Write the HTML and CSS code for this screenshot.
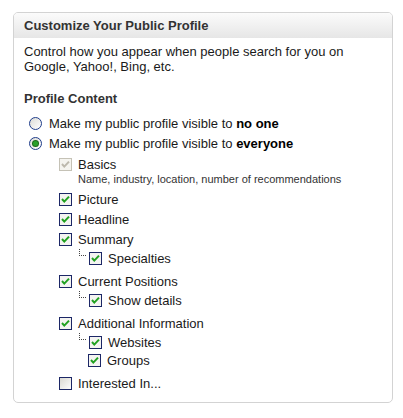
FILE: index.html
```html
<!DOCTYPE html>
<html>
<head>
<meta charset="utf-8">
<link rel="stylesheet" href="styles.css">
</head>
<body>
<div class="card">
  <div class="card-head"><h2>Customize Your Public Profile</h2></div>
  <div class="card-body">
    <p class="intro">Control how you appear when people search for you on<br>Google, Yahoo!, Bing, etc.</p>
    <h3>Profile Content</h3>
    <ul class="radios">
      <li><span class="radio"></span>Make my public profile visible to <b>no one</b></li>
      <li><span class="radio on"></span>Make my public profile visible to <b>everyone</b></li>
    </ul>
    <ul class="fields">
      <li>
        <div class="row basics"><svg class="cb" width="13" height="13" viewBox="0 0 13 13"><rect x=".5" y=".5" width="12" height="12" fill="#f5f4ef" stroke="#c5c2b6"/><path d="M3 6 L5.3 8.6 L10 3.6" fill="none" stroke="#bdb9ad" stroke-width="2"/></svg>Basics</div>
        <div class="note">Name, industry, location, number of recommendations</div>
      </li>
      <li><div class="row"><svg class="cb" width="13" height="13" viewBox="0 0 13 13"><rect x=".5" y=".5" width="12" height="12" fill="#f4f4f1" stroke="#1c2766"/><path d="M3 6 L5.3 8.6 L10 3.6" fill="none" stroke="#21a121" stroke-width="2"/></svg>Picture</div></li>
      <li><div class="row"><svg class="cb" width="13" height="13" viewBox="0 0 13 13"><rect x=".5" y=".5" width="12" height="12" fill="#f4f4f1" stroke="#1c2766"/><path d="M3 6 L5.3 8.6 L10 3.6" fill="none" stroke="#21a121" stroke-width="2"/></svg>Headline</div></li>
      <li>
        <div class="row"><svg class="cb" width="13" height="13" viewBox="0 0 13 13"><rect x=".5" y=".5" width="12" height="12" fill="#f4f4f1" stroke="#1c2766"/><path d="M3 6 L5.3 8.6 L10 3.6" fill="none" stroke="#21a121" stroke-width="2"/></svg>Summary</div>
        <ul class="sub">
          <li class="srow"><span class="branch"></span><svg class="cb" width="13" height="13" viewBox="0 0 13 13"><rect x=".5" y=".5" width="12" height="12" fill="#f4f4f1" stroke="#1c2766"/><path d="M3 6 L5.3 8.6 L10 3.6" fill="none" stroke="#21a121" stroke-width="2"/></svg>Specialties</li>
        </ul>
      </li>
      <li>
        <div class="row"><svg class="cb" width="13" height="13" viewBox="0 0 13 13"><rect x=".5" y=".5" width="12" height="12" fill="#f4f4f1" stroke="#1c2766"/><path d="M3 6 L5.3 8.6 L10 3.6" fill="none" stroke="#21a121" stroke-width="2"/></svg>Current Positions</div>
        <ul class="sub">
          <li class="srow"><span class="branch"></span><svg class="cb" width="13" height="13" viewBox="0 0 13 13"><rect x=".5" y=".5" width="12" height="12" fill="#f4f4f1" stroke="#1c2766"/><path d="M3 6 L5.3 8.6 L10 3.6" fill="none" stroke="#21a121" stroke-width="2"/></svg>Show details</li>
        </ul>
      </li>
      <li>
        <div class="row"><svg class="cb" width="13" height="13" viewBox="0 0 13 13"><rect x=".5" y=".5" width="12" height="12" fill="#f4f4f1" stroke="#1c2766"/><path d="M3 6 L5.3 8.6 L10 3.6" fill="none" stroke="#21a121" stroke-width="2"/></svg>Additional Information</div>
        <ul class="sub">
          <li class="srow"><span class="branch"></span><svg class="cb" width="13" height="13" viewBox="0 0 13 13"><rect x=".5" y=".5" width="12" height="12" fill="#f4f4f1" stroke="#1c2766"/><path d="M3 6 L5.3 8.6 L10 3.6" fill="none" stroke="#21a121" stroke-width="2"/></svg>Websites</li>
          <li class="srow"><span class="branch"></span><svg class="cb" width="13" height="13" viewBox="0 0 13 13"><rect x=".5" y=".5" width="12" height="12" fill="#f4f4f1" stroke="#1c2766"/><path d="M3 6 L5.3 8.6 L10 3.6" fill="none" stroke="#21a121" stroke-width="2"/></svg>Groups</li>
        </ul>
      </li>
      <li><div class="row"><svg class="cb" width="13" height="13" viewBox="0 0 13 13"><defs><linearGradient id="ug" x1="0" y1="0" x2="1" y2="1"><stop offset="0" stop-color="#d8d7d0"/><stop offset="1" stop-color="#ffffff"/></linearGradient></defs><rect x=".5" y=".5" width="12" height="12" fill="url(#ug)" stroke="#1c2766"/></svg>Interested In...</div></li>
    </ul>
  </div>
</div>
</body>
</html>
```

FILE: styles.css
```css
html, body {
  margin: 0;
  padding: 0;
  background: #fff;
}
body {
  font-family: "Liberation Sans", Arial, sans-serif;
  font-size: 13px;
  color: #1a1a1a;
}
.card {
  margin: 12px 0 0 13px;
  width: 378px;
  height: 389px;
  border: 1px solid #d3d3d3;
  border-radius: 5px;
  overflow: hidden;
}
.card-head {
  height: 25px;
  background: linear-gradient(#fbfbfb, #e6e6e6);
  padding-left: 10px;
}
.card-head h2 {
  margin: 0;
  font-size: 13px;
  line-height: 25px;
  font-weight: bold;
  color: #333;
}
.card-body {
  padding: 6px 10px 0 10px;
}
.intro {
  margin: 0;
  line-height: 15px;
}
h3 {
  margin: 17px 0 0 0;
  font-size: 13px;
  line-height: 16px;
  font-weight: bold;
  color: #333;
}
ul {
  list-style: none;
  margin: 0;
  padding: 0;
}
.radios {
  margin-top: 6px;
}
.radios li {
  height: 20px;
  display: flex;
  align-items: center;
  white-space: pre;
}
.radios b {
  color: #000;
}
.radio {
  width: 11px;
  height: 11px;
  border: 1px solid #1f3d8a;
  border-radius: 50%;
  background: linear-gradient(135deg, #dcdcd6, #ffffff);
  margin: 0 7px 0 5px;
  box-sizing: content-box;
  display: flex;
  align-items: center;
  justify-content: center;
  flex: none;
}
.radio.on::after {
  content: "";
  width: 5px;
  height: 5px;
  border-radius: 50%;
  background: #2aa02a;
  box-shadow: 0 0 0 1px #1d6a1d;
}
.fields {
  margin-top: 2px;
  padding-left: 35px;
}
.row {
  height: 20px;
  display: flex;
  align-items: center;
}
.row.basics {
  height: 18px;
}
.cb {
  display: block;
  flex: none;
  margin-right: 6px;
}
.note {
  font-size: 11px;
  line-height: 13px;
  color: #333;
  padding-left: 19px;
  margin-bottom: 3px;
}
.sub {
  padding-left: 19px;
  margin-bottom: 4px;
}
.srow {
  height: 18px;
  display: flex;
  align-items: center;
}
.branch {
  flex: none;
  align-self: flex-start;
  width: 6px;
  height: 6px;
  margin: 0 3px 0 1px;
}
.srow:first-child .branch {
  border-left: 1px dotted #444;
  border-bottom: 1px dotted #444;
}
```
